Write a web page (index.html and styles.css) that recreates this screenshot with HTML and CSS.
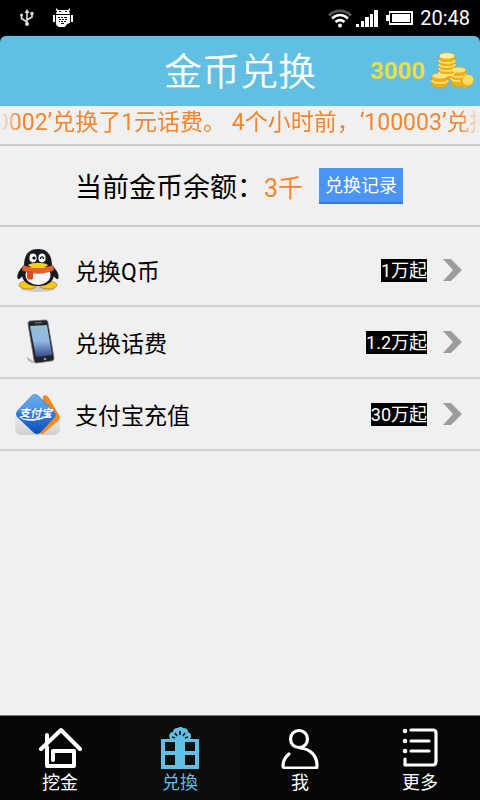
FILE: index.html
```html
<!DOCTYPE html>
<html lang="zh-CN">
<head>
  <meta charset="UTF-8" />
  <meta name="viewport" content="width=device-width, initial-scale=1.0"/>
  <title>金币兑换</title>
  <link rel="stylesheet" href="styles.css">
</head>
<body>

<div class="status-bar">
  <svg class="usb" width="16" height="18" viewBox="0 0 16 18" fill="none" stroke="#ddd" stroke-width="1.6">
    <path d="M8 3v12M8 13 2.5 9.5V6M8 11l5-3V5"/>
    <path d="M8 0l2.5 4h-5z" fill="#ddd" stroke="none"/>
    <circle cx="8" cy="15" r="2" fill="#ddd" stroke="none"/>
    <circle cx="2.5" cy="6" r="1.5" fill="#ddd" stroke="none"/>
    <path d="M11.5 3h3v3h-3z" fill="#ddd" stroke="none"/>
  </svg>
  <svg width="20" height="20" viewBox="0 0 20 20" fill="#fff">
    <path d="M3 0l2 2h10l2-2v2l-1 1 1 3H3l1-3-1-1zM0 7h2v7H0zM18 7h2v7h-2zM3 7h14v8l-3 1-2 3H6l-2-1-1-2z"/>
    <path d="M6 3h2v1H6zM12 3h2v1h-2zM5 9h2v1H5zM8 9h2v1H8zM11 9h3v1h-3zM6 11h2v1H6zM9 11h2v1H9zM12 11h2v1h-2zM6 13h1v1H6zM8 13h2v1H8zM11 13h2v1h-2zM8 15h3v1H8z" fill="#000"/>
  </svg>
  <span class="spacer"></span>
  <svg width="24" height="19" viewBox="0 0 24 19" fill="none" stroke="#fff" stroke-width="2.6">
    <path d="M1 6.5C7 .3 17 .3 23 6.500" stroke="#555"/>
    <path d="M4 9.5c5-4.500 11-4.500 16 0M7.500 13c3-2.500 6-2.500 9 0"/>
    <circle cx="12" cy="16.5" r="2" fill="#fff" stroke="none"/>
  </svg>
  <svg width="22" height="18" viewBox="0 0 22 18" fill="#fff">
    <path d="M0 15h3v3H0zM5 12h3v6H5zM9 8h4v10H9zM14 5h3v13h-3zM18 1h4v17h-4z"/>
  </svg>
  <svg class="battery" width="28" height="16" viewBox="0 0 28 16">
    <path d="M0 5h3V1h24v14H3v-4H0z" fill="#fff"/>
    <path d="M4 3h21v10H4z" fill="#000"/>
    <path d="M6 4h18v8H6z" fill="#fff"/>
  </svg>
  <span class="clock">20:48</span>
</div>

<header class="header">
  <h1>金币兑换</h1>
  <div class="coins">
    <span>3000</span>
    <svg width="44" height="38" viewBox="0 0 44 38">
      <g fill="#efb01c" stroke="#d99716" stroke-width=".6">
        <path d="M1 24v8c0 5 16 5 16 0v-8zM20 18v13c0 5 15 5 15 0V18z"/>
        <path d="M8 4v20c0 4 16 4 16 0V4z"/>
        <path d="M1 24c0-4 16-4 16 0s-16 4-16 0zM20 18c0-4 15-4 15 0s-15 4-15 0z" fill="#fbe57a"/>
        <ellipse cx="16" cy="4" rx="8" ry="3.2" fill="#fff0a0"/>
      </g>
      <path d="M8 8c0 4 16 4 16 0M8 12c0 4 16 4 16 0M8 16c0 4 16 4 16 0M8 20c0 4 16 4 16 0M1 28c0 4 16 4 16 0M20 22c0 4 15 4 15 0M20 26c0 4 15 4 15 0" fill="none" stroke="#ffe777" stroke-width="1.6"/>
      <ellipse cx="36" cy="29" rx="7" ry="6" transform="rotate(-25 36 29)" fill="#f1ad1e"/>
      <ellipse cx="37" cy="28" rx="5.5" ry="5" transform="rotate(-25 37 28)" fill="#ffdf62"/>
    </svg>
  </div>
</header>

<p class="ticker">100002’兑换了1元话费。 4个小时前，‘100003’兑换了1元话费。</p>

<section class="balance">
  <span>当前金币余额：</span>
  <strong>3千</strong>
  <button type="button">兑换记录</button>
</section>

<ul class="list">
  <li>
    <a href="#qq">
      <svg class="logo" width="46" height="46" viewBox="0 0 46 46">
        <ellipse cx="23" cy="42" rx="17" ry="3" fill="#ccc"/>
        <path d="M9 18c-5 5-8 11-6 14 1 1 4-2 6-5zM37 18c5 5 8 11 6 14-1 1-4-2-6-5z" fill="#181820"/>
        <ellipse cx="13" cy="38" rx="9" ry="4" fill="#f5c816" stroke="#b26c08" stroke-width=".7"/>
        <ellipse cx="33" cy="38" rx="9" ry="4" fill="#f5c816" stroke="#b26c08" stroke-width=".7"/>
        <path d="M23 2C12 2 9 10 9 19c-5 10-1 20 14 20s19-10 14-20C37 10 34 2 23 2z" fill="#181820"/>
        <ellipse cx="23" cy="28" rx="12.5" ry="10" fill="#f8f8fa"/>
        <path d="M8 18c9 4 21 4 30 0l1 5c-9 5-23 5-32 0z" fill="#e6602a"/>
        <path d="M12 24h6v8c-2 1-5 1-6-1z" fill="#da4d1f"/>
        <ellipse cx="18" cy="11" rx="3.6" ry="4.4" fill="#fff"/>
        <ellipse cx="27" cy="11" rx="3.6" ry="4.4" fill="#fff"/>
        <circle cx="19" cy="11" r="1.6"/>
        <path d="M25.500 12c0-3 3-3 3 0" fill="none" stroke="#000" stroke-width="1.2"/>
        <path d="M13 18c4-3 16-3 20 0-3 4-17 4-20 0z" fill="#f7d10c"/>
      </svg>
      <span class="name">兑换Q币</span>
      <span class="price">1万起</span>
      <svg class="arrow" width="20" height="22" viewBox="0 0 20 22"><path d="M0 0h8l11 11L8 22H0l10-11z" fill="#9c9c9c"/></svg>
    </a>
  </li>
  <li>
    <a href="#phone">
      <svg class="logo" width="46" height="46" viewBox="0 0 46 46">
        <defs>
          <linearGradient id="screen" x1="0" y1="0" x2="0" y2="1">
            <stop offset="0" stop-color="#91bfd2"/>
            <stop offset=".5" stop-color="#93b7e4"/>
            <stop offset="1" stop-color="#344a8c"/>
          </linearGradient>
        </defs>
        <path d="M12 38l8 5 12-1-12 2c-5 0-8-2-8-6z" fill="#bbb"/>
        <path d="M15 2l15-1c2 0 3 1 3 3l6 35c0 2-1 3-3 3l-14 2c-2 0-3-1-3-3L13 5c0-2 1-3 2-3z" fill="#22242a" stroke="#777" stroke-width=".8"/>
        <path d="M15 7l17-1 5 30-16 2z" fill="url(#screen)"/>
        <path d="M20 4l7-.5" stroke="#888"/>
        <circle cx="30" cy="40" r="1.3" fill="#999"/>
      </svg>
      <span class="name">兑换话费</span>
      <span class="price">1.2万起</span>
      <svg class="arrow" width="20" height="22" viewBox="0 0 20 22"><path d="M0 0h8l11 11L8 22H0l10-11z" fill="#9c9c9c"/></svg>
    </a>
  </li>
  <li>
    <a href="#alipay">
      <svg class="logo" width="46" height="46" viewBox="0 0 46 46">
        <defs>
          <linearGradient id="blue" x1="0" y1="0" x2="0" y2="1">
            <stop offset="0" stop-color="#5aa5ec"/>
            <stop offset="1" stop-color="#0b4fc0"/>
          </linearGradient>
          <linearGradient id="base" x1="0" y1="0" x2="0" y2="1">
            <stop offset=".4" stop-color="#f0f0f0"/>
            <stop offset="1" stop-color="#cfcfcf"/>
          </linearGradient>
        </defs>
        <rect x="0" y="10" width="45" height="34" rx="6" fill="url(#base)"/>
        <path d="M28 5q4-2 6 2l10 17q2 3-1 6L29 42q-2 2-4 0z" fill="#f58a1c"/>
        <path d="M17 4q3-2 6 0l16 16q3 3 1 6L25 42q-3 2-6 0L2 26q-2-3 0-6z" fill="url(#blue)"/>
        <path d="M17 5q3-2 5 0l16 16Q20 14 2 21z" fill="#8bc3f5" opacity=".3"/>
        <text class="logo-text" x="4" y="26">支付宝</text>
        <path d="M5 27c9 2 22 1 32-4-9 7-25 9-32 4z" fill="#fff"/>
      </svg>
      <span class="name">支付宝充值</span>
      <span class="price">30万起</span>
      <svg class="arrow" width="20" height="22" viewBox="0 0 20 22"><path d="M0 0h8l11 11L8 22H0l10-11z" fill="#9c9c9c"/></svg>
    </a>
  </li>
</ul>

<nav class="tabs">
  <a href="#dig">
    <svg width="44" height="42" viewBox="0 0 44 42" fill="none" stroke="#fff" stroke-width="4" stroke-linecap="round" stroke-linejoin="round">
      <path d="M3 22 23 3l19 19M9 15V8M9 20v19h27V24H15v9"/>
    </svg>
    <span>挖金</span>
  </a>
  <a href="#exchange" class="active">
    <svg width="38" height="42" viewBox="0 0 38 42">
      <path d="M0 12h9C7 8 9 5 12 5c0-4 4-4 5-4 2-2 4-1 5 0 3 0 5 1 5 4 3 1 4 4 2 7h9v30H0z" fill="#62bfe4"/>
      <path d="M4 15h10v9H4zM24 15h10v9H24zM4 28h10v10H4zM24 28h10v10H24z" fill="#0d0d0d"/>
      <path d="M19 4v4M14 6l2 3M24 6l-2 3M11 10l3 1M27 10l-3 1" stroke="#0d0d0d" stroke-width="1.6"/>
    </svg>
    <span>兑換</span>
  </a>
  <a href="#me">
    <svg width="38" height="42" viewBox="0 0 38 42" fill="none" stroke="#fff" stroke-width="3.2" stroke-linecap="round" stroke-linejoin="round">
      <circle cx="18" cy="12" r="8.5"/>
      <path d="M8 27c-5 4-6 8-6 12 0 1 1 2 2 2h31c1 0 1-1 1-2 0-10-6-17-17-18"/>
    </svg>
    <span>我</span>
  </a>
  <a href="#more">
    <svg width="36" height="42" viewBox="0 0 36 42" fill="none" stroke="#fff" stroke-width="3.2" stroke-linecap="round" stroke-linejoin="round">
      <path d="M9 3h22q3 0 3 3v28q0 4-3 4H3v-6M9 14h18M9 24h18"/>
      <path d="M3 4h.1M3 14h.1M3 24h.1" stroke-width="4.5"/>
    </svg>
    <span>更多</span>
  </a>
</nav>

</body>
</html>
```
FILE: styles.css
```css
html, body {
  margin: 0;
  padding: 0;
}

body {
  display: flex;
  flex-direction: column;
  min-height: 100vh;
  background: #f0f0f0;
  color: #000;
  font-family: Roboto, "Noto Sans CJK SC", sans-serif;
  overflow-x: hidden;
}

a {
  color: inherit;
  text-decoration: none;
}

svg {
  flex: none;
}

/* status bar */
.status-bar {
  display: flex;
  align-items: center;
  gap: 4px;
  height: 36px;
  padding: 0 10px 0 19px;
  background: #000;
  color: #fff;
}

.usb {
  margin-right: 14px;
}

.spacer {
  flex: 1;
}

.battery {
  margin: 0 2px 0 4px;
}

.clock {
  font-size: 20px;
  line-height: 36px;
}

/* the black behind shows at the rounded corners */
.header {
  display: grid;
  grid-template-columns: 1fr auto 1fr;
  align-items: center;
  height: 70px;
  background: #62bfe4;
  border-radius: 6px 6px 0 0;
  box-shadow: 0 -6px 0 #000;
  color: #fff;
}

.header h1 {
  grid-column: 2;
  margin: 0;
  padding-top: 2px;
  font-size: 38px;
  line-height: 56px;
  font-weight: 350;
}

.coins {
  display: flex;
  align-items: center;
  justify-content: flex-end;
  gap: 6px;
  padding-right: 5px;
  color: #ecdc48;
  font-size: 24px;
  font-weight: bold;
}

.ticker {
  margin: 0;
  height: 38px;
  overflow: hidden;
  color: #f5852b;
  font-size: 23px;
  line-height: 34px;
  white-space: nowrap;
  text-indent: -30px;
  -webkit-mask-image: linear-gradient(to right, transparent, #000 20px, #000 calc(100% - 20px), transparent);
  mask-image: linear-gradient(to right, transparent, #000 20px, #000 calc(100% - 20px), transparent);
}

.balance {
  display: flex;
  align-items: center;
  justify-content: center;
  height: 79px;
  padding-right: 2px;
  border-top: 2px solid #ccc;
  border-bottom: 2px solid #ccc;
  font-size: 27px;
}

.balance strong {
  color: #f5852b;
  font-size: 25px;
  font-weight: normal;
}

.balance button {
  margin-left: 16px;
  padding: 1px 6px 0;
  border: none;
  border-bottom: 2px solid #3a78d0;
  background: #4b93f7;
  color: #fff;
  font: inherit;
  font-size: 18px;
  line-height: 33px;
}

.list {
  margin: 0;
  padding: 8px 0 0;
  list-style: none;
}

.list li {
  border-bottom: 2px solid #d2d2d2;
}

.list a {
  display: flex;
  align-items: center;
  height: 70px;
  padding: 0 17px 0 15px;
}

.logo {
  margin-right: 14px;
}

.logo-text {
  fill: #fff;
  font-size: 11px;
  font-weight: bold;
  font-style: italic;
}

.name {
  flex: 1;
  font-size: 23px;
}

.price {
  background: #000;
  color: #fff;
  font-size: 18px;
  line-height: 23px;
}

.arrow {
  margin-left: 16px;
}

/* bottom tabs */
.tabs {
  display: flex;
  margin-top: auto;
  border-top: 1px solid #777;
  background: #060606;
  color: #fff;
}

.tabs a {
  flex: 1;
  display: flex;
  flex-direction: column;
  align-items: center;
  height: 84px;
  box-sizing: border-box;
  padding-top: 11px;
  font-size: 18px;
  line-height: 28px;
}

.tabs .active {
  background: #0d0d0d;
  color: #62bfe4;
}
```
